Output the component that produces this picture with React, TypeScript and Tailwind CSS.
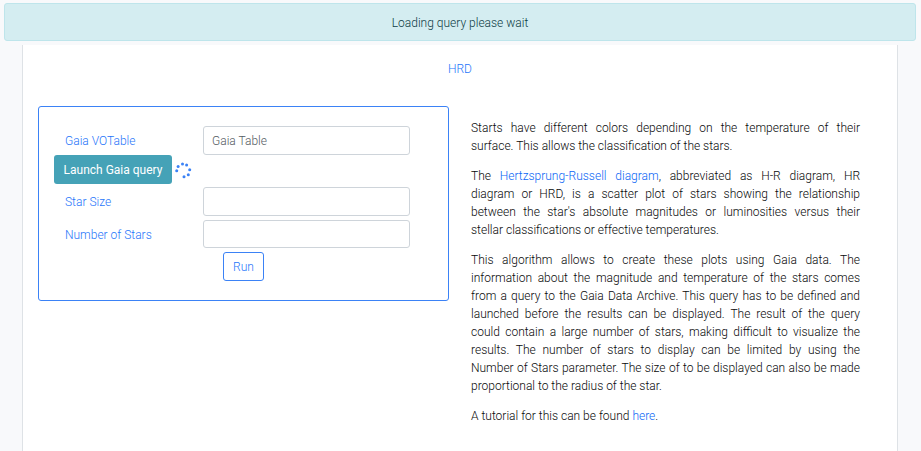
import type { ReactNode } from "react";

const fieldClass =
  "w-full rounded-[3px] border border-[#ced4da] bg-white px-2 text-xs text-[#343a40] placeholder:text-[#545b62] outline-none focus:border-[#3b82f6]";

function Field({
  id,
  label,
  placeholder,
  height = "h-[29px]",
}: {
  id: string;
  label: string;
  placeholder?: string;
  height?: string;
}) {
  return (
    <div className="grid grid-cols-[149px_1fr] items-center">
      <label htmlFor={id} className="pt-px pl-[11px] text-[#1f76fa]">
        {label}
      </label>
      <input id={id} type="text" placeholder={placeholder} className={`${height} ${fieldClass}`} />
    </div>
  );
}

function Spinner() {
  return (
    <svg role="img" aria-label="Loading" width="18" height="18" viewBox="0 0 18 18" fill="#3b82f6">
      <circle cx="8.5" cy="2.9" r="1.5" />
      <circle cx="12.6" cy="4.1" r="1.5" />
      <circle cx="15.7" cy="8.8" r="1.5" />
      <circle cx="14.3" cy="13.7" r="1.5" />
      <circle cx="10" cy="15.8" r="1.5" />
      <circle cx="2.7" cy="9.8" r="1.5" />
      <circle cx="4.1" cy="5.4" r="1.5" />
    </svg>
  );
}

function TextLink({ href, children }: { href: string; children: ReactNode }) {
  return (
    <a href={href} className="text-[#0a66f5] hover:underline">
      {children}
    </a>
  );
}

export default function App() {
  return (
    <div className="flex min-h-screen flex-col bg-[#f8f9fb] font-['Roboto','Noto_Sans',sans-serif] text-xs leading-[18px] font-light text-[#08090a]">
      <div
        role="status"
        className="mt-[3px] mr-[5px] mb-1 ml-1 rounded-[3px] border border-[#bee5eb] bg-[#d4edf1] pt-2.5 pb-2 text-center text-[#0c3c44]"
      >
        Loading query please wait
      </div>
      <main className="mr-[23px] ml-[22px] flex-1 border-x border-[#dee2e6] bg-white pt-[15px] pr-[37px] pb-5 pl-[15px]">
        <h1 className="-mr-[22px] text-center text-[#1f76fa]">HRD</h1>
        <div className="mt-7 grid grid-cols-[411fr_389fr] items-start gap-[22px]">
          <form
            onSubmit={(event) => event.preventDefault()}
            className="rounded-[3px] border border-[#3b82f6] pt-[19px] pr-[38px] pb-[19px] pl-[15px]"
          >
            <Field id="votable" label="Gaia VOTable" placeholder="Gaia Table" />
            <div className="mb-[3px] flex items-center gap-0.5">
              <button type="button" className="h-[29px] w-[118px] rounded-[3px] bg-[#45a2b7] font-normal whitespace-nowrap text-white">
                Launch Gaia query
              </button>
              <Spinner />
            </div>
            <div className="flex flex-col gap-1">
              <Field id="star-size" label="Star Size" />
              <Field id="star-count" label="Number of Stars" height="h-7" />
            </div>
            <div className="mt-1 pl-[169px]">
              <button type="submit" className="h-[29px] w-[41px] rounded-[3px] border border-[#3b82f6] text-[#1f76fa]">
                Run
              </button>
            </div>
          </form>
          <div className="flex flex-col gap-3 pt-[13px] text-justify">
            <p>
              Starts have different colors depending on the temperature of their{" "}
              <span className="whitespace-nowrap">surface. This</span> allows the classification of the stars.
            </p>
            <p>
              The <TextLink href="#diagram">Hertzsprung-Russell diagram</TextLink>, abbreviated as H-R diagram, HR
              diagram or HRD, is a scatter plot of stars showing the relationship between the star's absolute magnitudes
              or luminosities versus their <span className="whitespace-nowrap">stellar classifications</span> or
              effective temperatures.
            </p>
            <p>
              This algorithm allows to create these plots using Gaia data. The information about the magnitude and
              temperature of the stars comes from a query to the Gaia Data Archive. This query has to be defined and
              launched before the results can be displayed. The result of the query{" "}
              <span className="whitespace-nowrap">could contain</span> a large number of stars, making difficult to
              visualize the <span className="whitespace-nowrap">results. The</span> number of stars to display can be
              limited by using the <span className="whitespace-nowrap">Number of Stars</span> parameter. The size of to
              be displayed can also be made proportional to the radius of the star.
            </p>
            <p>
              A tutorial for this can be found <TextLink href="#tutorial">here</TextLink>.
            </p>
          </div>
        </div>
      </main>
    </div>
  );
}
